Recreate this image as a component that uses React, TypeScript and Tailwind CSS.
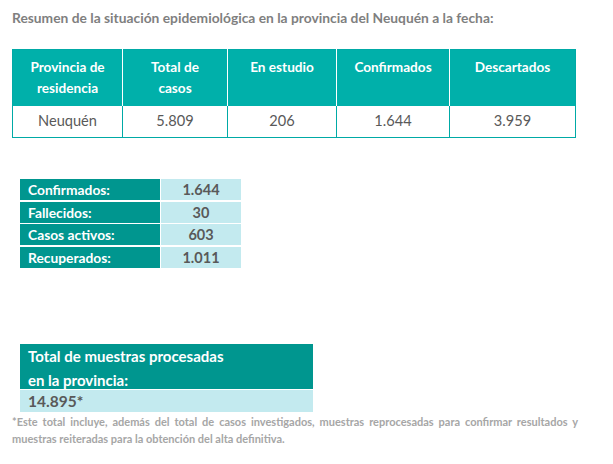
import React from 'react'

const headers = ['Provincia de residencia', 'Total de casos', 'En estudio', 'Confirmados', 'Descartados']
const row = ['Neuquén', '5.809', '206', '1.644', '3.959']
const widths = ['w-[110px]', 'w-[105px]', 'w-[109px]', 'w-[113px]', 'w-[126px]']

const summary = [
    { label: 'Confirmados:', value: '1.644' },
    { label: 'Fallecidos:', value: '30' },
    { label: 'Casos activos:', value: '603' },
    { label: 'Recuperados:', value: '1.011' },
]

export default function App() {
    return (
        <div className="w-[613px] h-[464px] bg-white font-['Lato','Open_Sans',sans-serif] overflow-hidden">
            {/* Title */}
            <p className="pl-[12px] pt-[10px] text-[13.8px] leading-[16px] font-bold text-[#7f7f7f]">
                Resumen de la situación epidemiológica en la provincia del Neuquén a la fecha:
            </p>

            {/* Main table */}
            <table className="ml-[12px] mt-[23px] w-[563px] table-fixed border-collapse border-[1.5px] border-[#00aaa6]">
                <thead>
                    <tr className="bg-[#00b0aa] h-[56px]">
                        {headers.map((h, i) => (
                            <th
                                key={h}
                                className={`${widths[i]} align-top pt-[7px] px-4 text-[13.6px] leading-[21px] font-bold text-white border-l border-white first:border-l-0`}
                            >
                                {h}
                            </th>
                        ))}
                    </tr>
                </thead>
                <tbody>
                    <tr className="h-[32px]">
                        {row.map((c) => (
                            <td
                                key={c}
                                className="text-center text-[14.6px] text-[#595959] border-l-[1.5px] border-[#00aaa6]"
                            >
                                {c}
                            </td>
                        ))}
                    </tr>
                </tbody>
            </table>

            {/* Summary */}
            <div className="ml-[20px] mt-[41px] w-[221px] flex flex-col gap-[1.5px]">
                {summary.map((s) => (
                    <div key={s.label} className="flex gap-[1px] h-[21px]">
                        <div className="w-[140px] bg-[#00968f] text-white font-bold text-[13.8px] leading-[21px] pl-[8px]">
                            {s.label}
                        </div>
                        <div className="flex-1 bg-[#c3eaef] text-[#595959] font-bold text-[14.5px] leading-[21px] text-center">
                            {s.value}
                        </div>
                    </div>
                ))}
            </div>

            {/* Samples */}
            <div className="ml-[20px] mt-[78px] w-[293px]">
                <div className="bg-[#00968f] text-white font-bold text-[15px] leading-[24px] pl-[8px] h-[45px]">
                    <div className="-mt-[2px]">
                        Total de muestras procesadas
                        <br />
                        en la provincia:
                    </div>
                </div>
                <div className="mt-[1px] bg-[#c3eaef] text-[#595959] font-bold text-[15.5px] leading-[22px] pl-[8px]">
                    14.895*
                </div>
            </div>
            <p className="pl-[12px] pr-[35px] mt-[1px] text-[11px] leading-[17px] font-bold text-[#a6a6a6] text-justify">
                *Este total incluye, además del total de casos investigados, muestras reprocesadas para confirmar resultados y muestras reiteradas para la obtención del alta definitiva.
            </p>
        </div>
    )
}
